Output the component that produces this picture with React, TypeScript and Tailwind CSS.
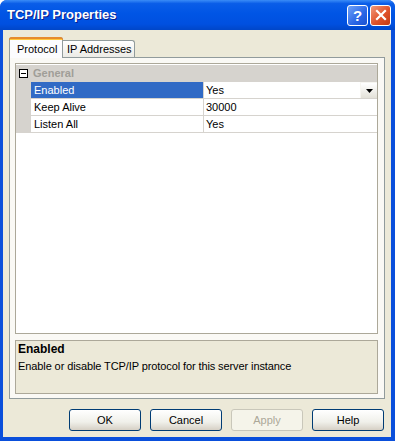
import React from 'react';

const rows = [
  { name: 'Enabled', value: 'Yes', selected: true },
  { name: 'Keep Alive', value: '30000', selected: false },
  { name: 'Listen All', value: 'Yes', selected: false },
];

const buttons = [
  { label: 'OK', disabled: false },
  { label: 'Cancel', disabled: false },
  { label: 'Apply', disabled: true },
  { label: 'Help', disabled: false },
];

export default function App() {
  return (
    <div
      className="w-[395px] h-[441px] flex flex-col rounded-t-[7px] bg-[#0A4FDB] text-[11px] text-black"
      style={{ fontFamily: '"Liberation Sans", Arial, sans-serif' }}
    >
      {/* title bar */}
      <div className="h-[30px] flex items-center pl-[7px] pr-[4px] rounded-t-[7px] bg-[linear-gradient(to_bottom,#3A8CF7_0%,#0A5DE8_12%,#0055E5_45%,#0050E0_80%,#0046C8_100%)]">
        <span className="flex-1 text-white font-bold text-[13px] [text-shadow:1px_1px_0_#0A1E8C]">TCP/IP Properties</span>
        <div className="flex gap-[2px]">
          <div className="w-[21px] h-[21px] rounded-[3px] border border-white bg-[linear-gradient(135deg,#6FA2F8,#2A66E6_60%,#1A52D0)] flex items-center justify-center text-white font-bold text-[15px] leading-none">
            ?
          </div>
          <div className="w-[21px] h-[21px] rounded-[3px] border border-white bg-[linear-gradient(135deg,#F19A7C,#E0522A_55%,#C43A12)] flex items-center justify-center">
            <svg width="12" height="12" viewBox="0 0 12 12">
              <path d="M2 2 L10 10 M10 2 L2 10" stroke="white" strokeWidth="2.2" strokeLinecap="square" />
            </svg>
          </div>
        </div>
      </div>

      {/* body */}
      <div className="flex-1 ml-[3px] mr-[4px] mb-[4px] bg-[#ECE9D8] flex flex-col pt-[7px] pl-[6px] pr-[6px]">
        {/* tabs */}
        <div className="flex items-end h-[20px]">
          <div className="relative z-10 h-[21px] w-[54px] -mb-px bg-[#FCFCFE] border border-[#919B9C] border-b-0 rounded-t-[3px] flex items-center pl-[7px] pt-[2px]">
            <div className="absolute -top-px -left-px -right-px h-[3px] rounded-t-[3px] bg-[#E68B2C] border-t border-[#E68B2C]" />
            <div className="absolute top-[1px] left-0 right-0 h-[1px] bg-[#FFC73C]" />
            Protocol
          </div>
          <div className="h-[17px] w-[72px] bg-[linear-gradient(to_bottom,#FFFFFF,#ECEBE6)] border border-[#919B9C] border-b-0 border-l-0 rounded-tr-[3px] flex items-center pl-[4px]">
            IP Addresses
          </div>
        </div>

        {/* tab panel */}
        <div className="h-[342px] w-[376px] border border-[#919B9C] bg-[#FAF9F5] pt-[5px] pl-[5px] pr-[6px] pb-[4px] flex flex-col gap-[6px]">
          {/* property grid */}
          <div className="h-[271px] border border-[#ACA899] bg-white flex flex-col pt-[1px]">
            <div className="h-[17px] flex bg-[#D6D3CE]">
              <div className="w-[15px] flex items-center justify-center">
                <div className="w-[9px] h-[9px] border border-black bg-white flex items-center justify-center">
                  <div className="w-[5px] h-[1px] bg-black" />
                </div>
              </div>
              <div className="flex items-center pl-[2px] font-bold text-[#A09E98]">General</div>
            </div>
            {rows.map(r => (
              <div key={r.name} className="h-[17px] flex">
                <div className="w-[15px] bg-[#D6D3CE]" />
                <div
                  className={`w-[173px] flex items-center pl-[3px] border-b border-r border-[#D6D3CE] ${
                    r.selected ? 'bg-[#316AC5] text-white' : 'bg-white'
                  }`}
                >
                  {r.name}
                </div>
                <div className="flex-1 flex items-center pl-[2px] border-b border-[#D6D3CE] bg-white">
                  <span className="flex-1">{r.value}</span>
                  {r.selected && (
                    <div className="w-[17px] h-[16px] bg-[linear-gradient(to_bottom,#FFFFFF,#E3E1D8)] border-l border-t border-[#F6F5F0] flex items-center justify-center">
                      <svg width="7" height="4" viewBox="0 0 7 4">
                        <path d="M0 0 H7 L3.5 4 Z" fill="black" />
                      </svg>
                    </div>
                  )}
                </div>
              </div>
            ))}
          </div>

          {/* description */}
          <div className="flex-1 border border-[#ACA899] bg-[#ECE9D8] px-[2px]">
            <div className="font-bold text-[12px] leading-[16px]">Enabled</div>
            <div className="leading-[16px] mt-[1px] tracking-[-0.1px]">Enable or disable TCP/IP protocol for this server instance</div>
          </div>
        </div>

        {/* buttons */}
        <div className="flex justify-end gap-[9px] mt-[10px] pr-[1px]">
          {buttons.map(b => (
            <div
              key={b.label}
              className={`w-[72px] h-[22px] rounded-[3px] border flex items-center justify-center ${
                b.disabled
                  ? 'border-[#C9C7BA] bg-[#F5F4EA] text-[#ACA899]'
                  : 'border-[#003C74] bg-[linear-gradient(to_bottom,#FFFFFF,#F0F0EA_60%,#D6D0C5)]'
              }`}
            >
              {b.label}
            </div>
          ))}
        </div>
      </div>
    </div>
  );
}
